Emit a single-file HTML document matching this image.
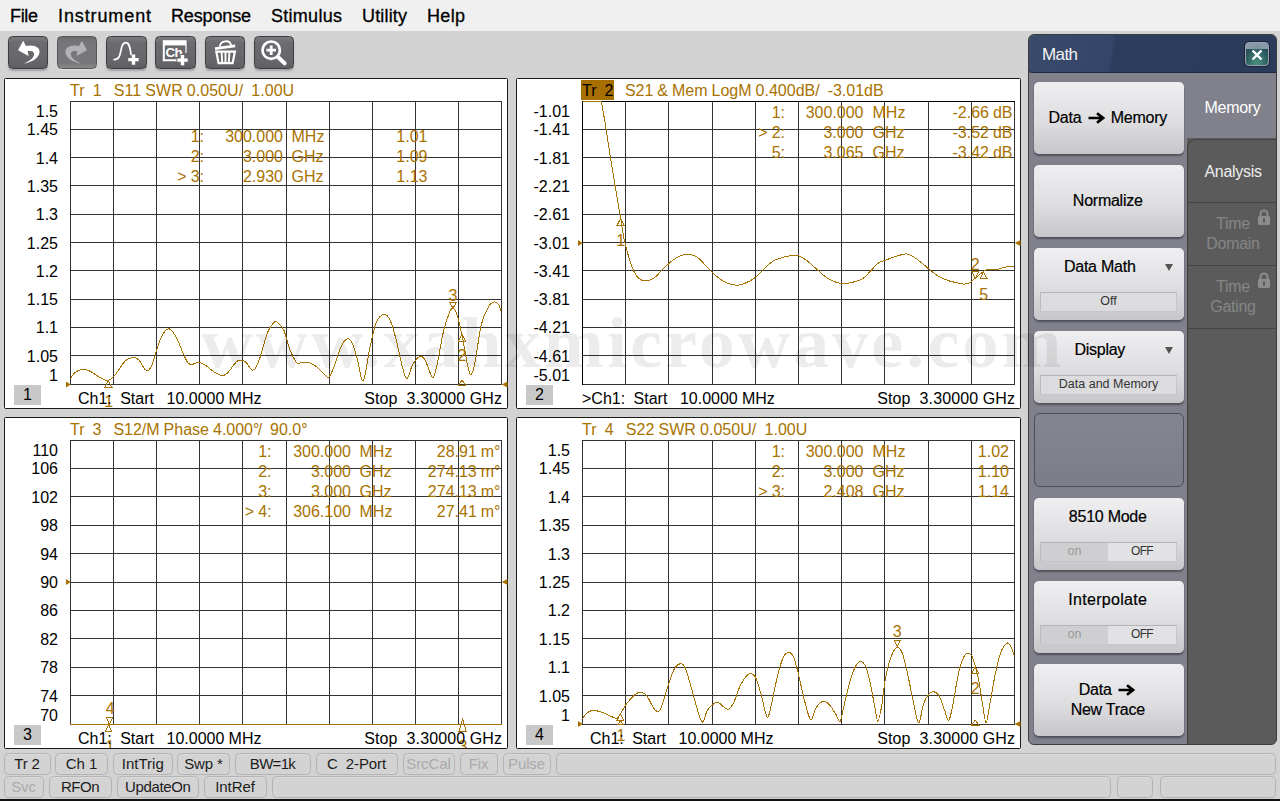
<!DOCTYPE html>
<html><head><meta charset="utf-8"><title>VNA</title>
<style>
*{box-sizing:border-box;margin:0;padding:0}
html,body{width:1280px;height:801px;overflow:hidden}
body{background:#d3d3d3;font-family:"Liberation Sans",sans-serif;position:relative;color:#000}
.abs{position:absolute}
#menu{position:absolute;left:0;top:0;width:1280px;height:31px;background:#f0f0f0}
#menu span{position:absolute;top:4.5px;-webkit-text-stroke:0.3px #000;font-size:18px;line-height:22px;color:#000;white-space:nowrap}
.tb{position:absolute;top:36px;width:40.5px;height:32.5px;border-radius:4.5px;border:1px solid #3e3e42;
 background:linear-gradient(#7a7a7e,#6c6c70 20%,#66666a 80%,#5e5e62);box-shadow:0 2px 1.5px rgba(0,0,0,.22)}
.tb.dis{background:linear-gradient(#6e6e72,#767679 20%,#78787b 85%,#8a8a8d);border-color:#56565a;box-shadow:0 1px 0 rgba(255,255,255,.25)}
.tb svg{position:absolute;left:-1px;top:-1px}
.win{position:absolute;background:#fff;border:1px solid #1a1a14;border-radius:1.5px}
.t{position:absolute;font-size:16px;line-height:19px;white-space:pre;color:#000;word-spacing:-0.45px}
.ti{letter-spacing:0.05px}
.g{color:#a87200}
.yl{text-align:right}
.hl{background:#a66f00;color:#000;padding:2px 1px 1px 1px;letter-spacing:0;margin-right:-1.5px}
.ib{position:absolute;width:27px;height:20px;background:#c8c8c8;font-size:16px;line-height:20px;text-align:center}
svg text{font-family:"Liberation Sans",sans-serif}
#wm{position:absolute;z-index:50;left:201px;top:303px;font-family:"Liberation Serif",serif;font-weight:bold;font-size:72px;
 line-height:80px;letter-spacing:3.1px;color:rgba(0,0,0,.075);white-space:nowrap;pointer-events:none}
/* status bar */
.sc{position:absolute;height:22px;border:1px solid #b4b4b4;border-radius:4.5px;font-size:15px;line-height:19px;
 text-align:center;color:#1c1c1c;white-space:pre;letter-spacing:-0.1px;box-shadow:inset 0 1px 0 #dadada}
.sc.d{color:#aaa}
/* right panel */
#pn{position:absolute;left:1028px;top:34px;width:249px;height:711px;border-radius:6px;background:#5b5b5b;overflow:hidden;border:1px solid #3c3c40}
#pt{position:absolute;left:0;top:0;width:249px;height:38px;background:linear-gradient(100deg,#3a4a6a 0,#34456a 33%,#2c3d5e 34.5%,#2b3b5a 100%);border-bottom:1px solid #1c2740;
 color:#f4f4f4;font-size:17px;letter-spacing:-0.6px;line-height:40px;padding-left:13px;border-radius:6px 6px 4px 4px}
#pl{position:absolute;left:0;top:38px;width:158px;height:671px;background:#81818c}
.pb{position:absolute;left:5px;width:149.5px;height:72px;border-radius:5px;background:linear-gradient(#efeff1,#dedee1 55%,#c6c6ca);
 box-shadow:0 2px 2px rgba(40,40,50,.55);font-size:16px;letter-spacing:-0.25px;text-align:center;color:#000;-webkit-text-stroke:0.2px #000}
.pb .l{position:absolute;left:-1px;width:100%;line-height:20px}
.fld{position:absolute;left:6px;top:43.5px;width:137px;height:20px;background:#dcdcde;border:1px solid #c6c6ca;border-top-color:#b4b4b8;border-left-color:#bcbcc0;
 font-size:12.5px;letter-spacing:0;line-height:17px;color:#333;text-align:center;-webkit-text-stroke:0}
.tab{position:absolute;left:158px;width:91px;height:63px;background:#5b5b5b;border-top:1px solid #444;color:#868686;font-size:16px;letter-spacing:-0.3px;text-align:center;line-height:20px}
</style></head><body>

<div id="menu">
<span style="left:10px;letter-spacing:-0.33px">File</span>
<span style="left:58px;letter-spacing:0.89px">Instrument</span>
<span style="left:171px;letter-spacing:-0.15px">Response</span>
<span style="left:271px;letter-spacing:0.28px">Stimulus</span>
<span style="left:362px;letter-spacing:0.17px">Utility</span>
<span style="left:427px;letter-spacing:0.33px">Help</span>
</div>
<div class="tb" style="left:7.5px"><svg width="40" height="32" viewBox="0 0 40 32"><path d="M10 14.2 L15.2 4.8 L18 10 C23 8.8 27 9.6 29.5 11.5 C32.5 14 32 18 29.3 21.2 C26.5 24.3 21 26.6 15.8 27.7 C19.5 26 23.5 23.8 25.2 21 C26.8 18.3 26.2 16 24 15.3 C22.6 14.8 21 14.8 19.6 15.1 L20.6 20 Z" fill="#fff"/></svg></div>
<div class="tb dis" style="left:56.8px"><svg width="40" height="32" viewBox="0 0 40 32"><path d="M30 14.2 L24.8 4.8 L22 10 C17 8.8 13 9.6 10.5 11.5 C7.5 14 8 18 10.7 21.2 C13.5 24.3 19 26.6 24.2 27.7 C20.5 26 16.5 23.8 14.8 21 C13.2 18.3 13.8 16 16 15.3 C17.4 14.8 19 14.8 20.4 15.1 L19.4 20 Z" fill="#b2b2b4"/></svg></div>
<div class="tb" style="left:106.0px"><svg width="40" height="32" viewBox="0 0 40 32"><path d="M8.2 23.6 C13.5 23.6 14 19 15 14 C16 8 17.5 6.6 19.8 6.6 C22.8 6.6 24 10 25 18.5" fill="none" stroke="#fff" stroke-width="1.7" stroke-linecap="round"/><path d="M22.3 23.6 h10.4 M27.5 18.4 v10.4" stroke="#fff" stroke-width="3.4"/></svg></div>
<div class="tb" style="left:155.2px"><svg width="40" height="32" viewBox="0 0 40 32"><path d="M8.8 9 v15.3 h13" fill="none" stroke="#fff" stroke-width="2"/><path d="M31 9 v8" stroke="#fff" stroke-width="1.2"/><rect x="7.8" y="4.2" width="23.8" height="5.2" fill="#fff"/><text x="10.6" y="21.2" font-size="13.4" font-weight="bold" fill="#fff" letter-spacing="-0.7">Ch</text><path d="M21.5 24.1 h12 M27.5 18.1 v12" stroke="#6a6a6e" stroke-width="5.6"/><path d="M22.3 24.1 h10.4 M27.5 18.9 v10.4" stroke="#fff" stroke-width="3.4"/></svg></div>
<div class="tb" style="left:204.5px"><svg width="40" height="32" viewBox="0 0 40 32"><path d="M10 12.6 L30.2 9.9" stroke="#fff" stroke-width="2.6"/><path d="M14.8 10.6 C15.4 4.2 25 3.4 26 9.2" fill="none" stroke="#fff" stroke-width="1.8"/><path d="M11.3 15.6 h18.6 l-2.3 11.5 h-14 Z" fill="none" stroke="#fff" stroke-width="2.2"/><path d="M16.6 16 l.6 10.5 M20.5 16 v10.5 M24.4 16 l-.6 10.5" stroke="#fff" stroke-width="1.9"/></svg></div>
<div class="tb" style="left:253.8px"><svg width="40" height="32" viewBox="0 0 40 32"><circle cx="17.2" cy="14.2" r="8.7" fill="none" stroke="#fff" stroke-width="2.7"/><path d="M24 21 L30.6 27.4" stroke="#fff" stroke-width="4" stroke-linecap="round"/><path d="M12.4 14.2 h9.6 M17.2 9.4 v9.6" stroke="#fff" stroke-width="2.8"/></svg></div>
<div class="win" style="left:4px;top:78px;width:504px;height:331px"></div>
<svg class="abs" style="left:0;top:0" width="1280" height="801" viewBox="0 0 1280 801">
<path d="M70.5 101.0 V385.0 M113.5 101.0 V385.0 M156.5 101.0 V385.0 M199.5 101.0 V385.0 M242.5 101.0 V385.0 M286.5 101.0 V385.0 M329.5 101.0 V385.0 M372.5 101.0 V385.0 M415.5 101.0 V385.0 M458.5 101.0 V385.0 M501.5 101.0 V385.0 M70.0 101.5 H502.0 M70.0 129.5 H502.0 M70.0 157.5 H502.0 M70.0 185.5 H502.0 M70.0 214.5 H502.0 M70.0 242.5 H502.0 M70.0 270.5 H502.0 M70.0 299.5 H502.0 M70.0 327.5 H502.0 M70.0 355.5 H502.0 M70.0 384.5 H502.0" stroke="#333333" stroke-width="1" fill="none" shape-rendering="crispEdges"/>
<path d="M70.5 378.8 C71.2 377.7 73.0 374.0 75.0 372.5 C77.0 371.0 80.0 369.7 82.5 369.5 C85.0 369.3 87.1 369.9 90.0 371.2 C92.9 372.6 97.0 376.0 100.0 377.5 C103.0 379.0 105.5 380.9 108.0 380.5 C110.5 380.1 112.2 378.2 115.0 375.0 C117.8 371.8 122.1 364.2 125.0 361.2 C127.9 358.3 130.2 357.7 132.5 357.5 C134.8 357.3 136.7 358.0 138.8 360.0 C140.8 362.0 143.3 367.8 145.0 369.5 C146.7 371.2 147.5 371.0 148.8 370.0 C150.0 369.0 150.6 368.8 152.5 363.8 C154.4 358.8 157.7 345.6 160.0 340.0 C162.3 334.4 164.4 331.7 166.2 330.0 C168.1 328.3 169.4 328.3 171.2 330.0 C173.1 331.7 175.2 335.4 177.5 340.0 C179.8 344.6 182.9 353.4 185.0 357.5 C187.1 361.6 187.7 363.7 190.0 364.5 C192.3 365.3 196.2 362.4 198.8 362.5 C201.2 362.6 202.3 363.3 205.0 365.0 C207.7 366.7 212.1 370.8 215.0 372.5 C217.9 374.2 220.4 375.4 222.5 375.5 C224.6 375.6 225.2 375.2 227.5 373.0 C229.8 370.8 234.0 364.2 236.2 362.0 C238.5 359.8 239.6 359.9 241.2 360.0 C242.9 360.1 244.6 360.9 246.2 362.5 C247.9 364.1 249.8 368.5 251.2 369.5 C252.7 370.5 253.5 370.8 255.0 368.8 C256.5 366.8 257.9 363.5 260.0 357.5 C262.1 351.5 265.2 338.3 267.5 332.5 C269.8 326.7 272.1 324.2 273.8 322.5 C275.4 320.8 275.8 321.2 277.5 322.5 C279.2 323.8 281.7 325.4 283.8 330.0 C285.8 334.6 287.9 344.7 290.0 350.0 C292.1 355.3 294.6 359.8 296.2 362.0 C297.9 364.2 297.9 362.9 300.0 363.0 C302.1 363.1 305.8 361.8 308.8 362.5 C311.7 363.2 314.8 365.4 317.5 367.5 C320.2 369.6 323.1 373.4 325.0 375.0 C326.9 376.6 327.3 378.2 328.8 377.0 C330.2 375.8 331.7 372.6 333.8 367.5 C335.8 362.4 339.0 351.0 341.2 346.2 C343.5 341.5 345.6 339.2 347.5 338.8 C349.4 338.3 350.8 340.2 352.5 343.8 C354.2 347.3 355.9 354.0 357.5 360.0 C359.1 366.0 360.8 377.5 362.0 380.0 C363.2 382.5 363.7 380.4 365.0 375.0 C366.3 369.6 368.1 356.2 370.0 347.5 C371.9 338.8 374.0 328.0 376.2 322.5 C378.5 317.0 381.5 314.9 383.8 314.5 C386.0 314.1 387.9 315.8 390.0 320.0 C392.1 324.2 394.2 332.1 396.2 340.0 C398.3 347.9 400.7 361.0 402.5 367.5 C404.3 374.0 405.3 379.2 407.0 378.8 C408.7 378.3 410.3 368.8 412.5 365.0 C414.7 361.2 417.9 357.1 420.0 356.2 C422.1 355.4 423.3 357.3 425.0 360.0 C426.7 362.7 428.6 369.6 430.0 372.5 C431.4 375.4 432.0 379.2 433.2 377.5 C434.5 375.8 435.8 370.4 437.5 362.5 C439.2 354.6 441.7 338.5 443.8 330.0 C445.8 321.5 448.5 314.8 450.0 311.2 C451.5 307.7 452.0 308.5 453.0 308.8 C454.0 309.0 454.8 308.1 456.2 312.5 C457.8 316.9 460.1 326.2 462.0 335.0 C463.9 343.8 466.0 358.4 467.5 365.0 C469.0 371.6 470.0 374.9 471.2 374.5 C472.5 374.1 473.3 370.8 475.0 362.5 C476.7 354.2 479.0 334.4 481.2 325.0 C483.5 315.6 486.5 310.1 488.8 306.2 C491.0 302.4 492.8 302.2 494.5 302.0 C496.2 301.8 497.6 303.5 498.8 305.0 C499.9 306.5 500.8 310.2 501.2 311.2" stroke="#a87200" stroke-width="1" fill="none" shape-rendering="crispEdges"/>
<path d="M108.4 380.7 L105.0 387.2 L111.8 387.2 Z" fill="none" stroke="#a87200" stroke-width="1" shape-rendering="crispEdges"/>
<text x="108.8" y="407.0" text-anchor="middle" font-size="16" fill="#a87200">1</text>
<text x="453.0" y="301.0" text-anchor="middle" font-size="16" fill="#a87200">3</text>
<path d="M453.0 308.5 L449.6 302.0 L456.4 302.0 Z" fill="none" stroke="#a87200" stroke-width="1" shape-rendering="crispEdges"/>
<path d="M462.0 334.5 L458.6 341.0 L465.4 341.0 Z" fill="none" stroke="#a87200" stroke-width="1" shape-rendering="crispEdges"/>
<text x="462.0" y="361.0" text-anchor="middle" font-size="16" fill="#a87200">2</text>
<path d="M462.0 380.0 L458.5 385.0 L465.5 385.0 Z" fill="none" stroke="#a87200" stroke-width="1" shape-rendering="crispEdges"/>
<path d="M66.0 381.5 l4.8 3 l-4.8 3 Z" fill="#a87200"/>
<path d="M507.5 381.5 l-5.8 3 l5.8 3 Z" fill="#a87200"/>
</svg>
<div class="t g ti" style="left:70px;top:81px">Tr&nbsp; 1&nbsp;&nbsp; S11 SWR 0.050U/&nbsp; 1.00U</div>
<div class="t yl" style="left:6px;top:102.0px;width:52px">1.5</div>
<div class="t yl" style="left:6px;top:120.3px;width:52px">1.45</div>
<div class="t yl" style="left:6px;top:148.6px;width:52px">1.4</div>
<div class="t yl" style="left:6px;top:176.9px;width:52px">1.35</div>
<div class="t yl" style="left:6px;top:205.2px;width:52px">1.3</div>
<div class="t yl" style="left:6px;top:233.5px;width:52px">1.25</div>
<div class="t yl" style="left:6px;top:261.8px;width:52px">1.2</div>
<div class="t yl" style="left:6px;top:290.1px;width:52px">1.15</div>
<div class="t yl" style="left:6px;top:318.4px;width:52px">1.1</div>
<div class="t yl" style="left:6px;top:346.7px;width:52px">1.05</div>
<div class="t yl" style="left:6px;top:366.0px;width:52px">1</div>
<div class="ib" style="left:14px;top:385px">1</div>
<div class="t" style="word-spacing:-0.25px;left:78px;top:389px">Ch1:&nbsp; Start&nbsp;&nbsp; 10.0000 MHz</div>
<div class="t" style="word-spacing:0;letter-spacing:0.1px;right:778px;top:389px">Stop&nbsp; 3.30000 GHz</div>
<div class="t g" style="right:1076.0px;top:127px">1:</div>
<div class="t g" style="right:997.0px;top:127px">300.000</div>
<div class="t g" style="left:291.5px;top:127px">MHz</div>
<div class="t g" style="right:852.5px;top:127px">1.01</div>
<div class="t g" style="right:1076.0px;top:147px">2:</div>
<div class="t g" style="right:997.0px;top:147px">3.000</div>
<div class="t g" style="left:291.5px;top:147px">GHz</div>
<div class="t g" style="right:852.5px;top:147px">1.09</div>
<div class="t g" style="right:1076.0px;top:167px">&gt; 3:</div>
<div class="t g" style="right:997.0px;top:167px">2.930</div>
<div class="t g" style="left:291.5px;top:167px">GHz</div>
<div class="t g" style="right:852.5px;top:167px">1.13</div>
<div class="win" style="left:516px;top:78px;width:505px;height:331px"></div>
<svg class="abs" style="left:0;top:0" width="1280" height="801" viewBox="0 0 1280 801">
<path d="M582.5 101.0 V385.0 M625.5 101.0 V385.0 M668.5 101.0 V385.0 M712.5 101.0 V385.0 M755.5 101.0 V385.0 M798.5 101.0 V385.0 M841.5 101.0 V385.0 M884.5 101.0 V385.0 M928.5 101.0 V385.0 M971.5 101.0 V385.0 M1014.5 101.0 V385.0 M582.0 101.5 H1015.0 M582.0 129.5 H1015.0 M582.0 157.5 H1015.0 M582.0 185.5 H1015.0 M582.0 214.5 H1015.0 M582.0 242.5 H1015.0 M582.0 270.5 H1015.0 M582.0 299.5 H1015.0 M582.0 327.5 H1015.0 M582.0 355.5 H1015.0 M582.0 384.5 H1015.0" stroke="#333333" stroke-width="1" fill="none" shape-rendering="crispEdges"/>
<path d="M601.4 101.7 C602.0 105.0 603.4 112.6 604.9 121.8 C606.4 131.0 608.5 145.5 610.3 156.7 C612.1 167.9 613.9 178.9 615.6 189.0 C617.3 199.1 619.1 209.0 620.5 217.1 C621.9 225.2 622.5 231.2 623.7 237.3 C624.9 243.4 626.1 248.0 627.7 253.4 C629.3 258.8 631.3 265.4 633.1 269.5 C634.9 273.6 636.3 276.2 638.5 278.1 C640.7 280.0 643.8 281.1 646.5 281.0 C649.2 280.9 651.9 279.4 654.6 277.5 C657.3 275.6 659.7 272.3 662.6 269.5 C665.5 266.7 668.9 263.2 672.0 260.9 C675.1 258.6 678.5 256.6 681.4 255.5 C684.3 254.4 686.8 254.2 689.5 254.5 C692.2 254.8 694.6 255.3 697.5 257.4 C700.4 259.4 703.8 263.7 706.9 266.8 C710.0 269.9 713.2 273.6 716.3 276.2 C719.4 278.8 722.4 280.9 725.7 282.4 C729.1 283.9 733.0 285.2 736.4 285.3 C739.8 285.4 742.7 284.2 745.8 282.9 C748.9 281.6 752.1 279.9 755.2 277.5 C758.3 275.1 761.5 271.0 764.6 268.2 C767.7 265.4 770.6 262.5 774.0 260.6 C777.4 258.7 781.0 257.8 784.8 256.9 C788.6 256.0 793.2 255.0 796.8 255.5 C800.4 256.0 803.1 258.0 806.2 260.1 C809.3 262.2 812.2 265.3 815.6 268.2 C819.0 271.1 823.0 275.2 826.4 277.5 C829.8 279.8 832.9 281.1 835.8 282.1 C838.7 283.1 840.9 283.5 843.8 283.5 C846.7 283.5 850.1 282.9 853.2 282.1 C856.3 281.3 859.7 280.8 862.6 278.9 C865.5 277.0 868.0 273.5 870.7 270.8 C873.4 268.1 876.1 264.6 878.7 262.8 C881.3 261.0 883.2 260.9 886.3 259.8 C889.3 258.7 893.7 257.1 897.0 256.1 C900.3 255.1 903.3 253.8 906.0 253.9 C908.7 254.0 910.5 255.0 913.2 256.6 C915.9 258.2 919.2 260.9 922.2 263.3 C925.2 265.7 928.2 268.7 931.2 271.0 C934.2 273.3 937.2 275.7 940.2 277.3 C943.2 278.9 946.1 279.9 949.1 280.9 C952.1 281.8 955.6 282.5 958.1 283.0 C960.6 283.5 962.5 284.2 964.4 284.1 C966.3 284.1 968.0 283.7 969.8 282.7 C971.6 281.7 973.4 279.7 975.2 278.2 C977.0 276.7 978.7 275.1 980.6 273.7 C982.5 272.3 984.0 270.4 986.9 269.7 C989.8 268.9 994.4 269.7 997.7 269.2 C1001.0 268.7 1003.9 267.2 1006.6 266.8 C1009.3 266.4 1012.6 266.6 1013.8 266.5" stroke="#a87200" stroke-width="1" fill="none" shape-rendering="crispEdges"/>
<path d="M582.5 101 V385 M601 101.5 H1015" stroke="#000" stroke-width="1" shape-rendering="crispEdges"/>
<path d="M583 101.5 H601.5" stroke="#a87200" stroke-width="1" shape-rendering="crispEdges"/>
<path d="M620.6 218.5 L617.2 225.0 L624.0 225.0 Z" fill="none" stroke="#a87200" stroke-width="1" shape-rendering="crispEdges"/>
<text x="620.6" y="246.0" text-anchor="middle" font-size="16" fill="#a87200">1</text>
<text x="975.2" y="269.5" text-anchor="middle" font-size="16" fill="#a87200">2</text>
<path d="M975.2 278.2 L971.8 271.7 L978.6 271.7 Z" fill="none" stroke="#a87200" stroke-width="1" shape-rendering="crispEdges"/>
<path d="M983.6 272.0 L980.2 278.5 L987.0 278.5 Z" fill="none" stroke="#a87200" stroke-width="1" shape-rendering="crispEdges"/>
<text x="983.6" y="299.5" text-anchor="middle" font-size="16" fill="#a87200">5</text>
<path d="M578.0 240.0 l4.8 3 l-4.8 3 Z" fill="#a87200"/>
<path d="M1020.5 240.0 l-5.8 3 l5.8 3 Z" fill="#a87200"/>
</svg>
<div class="t g" style="left:581px;top:81px"><span class="hl">Tr&nbsp; 2</span>&nbsp;&nbsp; S21 &amp; Mem LogM 0.400dB/&nbsp; -3.01dB</div>
<div class="t yl" style="left:518px;top:102.0px;width:52px">-1.01</div>
<div class="t yl" style="left:518px;top:120.3px;width:52px">-1.41</div>
<div class="t yl" style="left:518px;top:148.6px;width:52px">-1.81</div>
<div class="t yl" style="left:518px;top:176.9px;width:52px">-2.21</div>
<div class="t yl" style="left:518px;top:205.2px;width:52px">-2.61</div>
<div class="t yl" style="left:518px;top:233.5px;width:52px">-3.01</div>
<div class="t yl" style="left:518px;top:261.8px;width:52px">-3.41</div>
<div class="t yl" style="left:518px;top:290.1px;width:52px">-3.81</div>
<div class="t yl" style="left:518px;top:318.4px;width:52px">-4.21</div>
<div class="t yl" style="left:518px;top:346.7px;width:52px">-4.61</div>
<div class="t yl" style="left:518px;top:366.0px;width:52px">-5.01</div>
<div class="ib" style="left:526px;top:385px">2</div>
<div class="t" style="word-spacing:-0.25px;left:582px;top:389px">&gt;Ch1:&nbsp; Start&nbsp;&nbsp; 10.0000 MHz</div>
<div class="t" style="word-spacing:0;letter-spacing:0.1px;right:265px;top:389px">Stop&nbsp; 3.30000 GHz</div>
<div class="t g" style="right:495.0px;top:103px">1:</div>
<div class="t g" style="right:416.5px;top:103px">300.000</div>
<div class="t g" style="left:872.5px;top:103px">MHz</div>
<div class="t g" style="right:267.5px;top:103px">-2.66 dB</div>
<div class="t g" style="right:495.0px;top:123px">&gt; 2:</div>
<div class="t g" style="right:416.5px;top:123px">3.000</div>
<div class="t g" style="left:872.5px;top:123px">GHz</div>
<div class="t g" style="right:267.5px;top:123px">-3.52 dB</div>
<div class="t g" style="right:495.0px;top:143px">5:</div>
<div class="t g" style="right:416.5px;top:143px">3.065</div>
<div class="t g" style="left:872.5px;top:143px">GHz</div>
<div class="t g" style="right:267.5px;top:143px">-3.42 dB</div>
<div class="win" style="left:4px;top:417px;width:504px;height:332px"></div>
<svg class="abs" style="left:0;top:0" width="1280" height="801" viewBox="0 0 1280 801">
<path d="M70.5 440.0 V725.0 M113.5 440.0 V725.0 M156.5 440.0 V725.0 M199.5 440.0 V725.0 M242.5 440.0 V725.0 M286.5 440.0 V725.0 M329.5 440.0 V725.0 M372.5 440.0 V725.0 M415.5 440.0 V725.0 M458.5 440.0 V725.0 M501.5 440.0 V725.0 M70.0 440.5 H502.0 M70.0 468.5 H502.0 M70.0 496.5 H502.0 M70.0 525.5 H502.0 M70.0 553.5 H502.0 M70.0 582.5 H502.0 M70.0 610.5 H502.0 M70.0 638.5 H502.0 M70.0 667.5 H502.0 M70.0 695.5 H502.0 M70.0 724.5 H502.0" stroke="#333333" stroke-width="1" fill="none" shape-rendering="crispEdges"/>
<clipPath id="c3"><rect x="5" y="419" width="502" height="329"/></clipPath>
<path d="M70 724.5 H501.5" stroke="#a87200" stroke-width="1" shape-rendering="crispEdges"/>
<text x="110.3" y="714.0" text-anchor="middle" font-size="16" fill="#a87200">4</text>
<path d="M109.5 724.5 L106.1 717.0 L112.9 717.0 Z" fill="none" stroke="#a87200" stroke-width="1" shape-rendering="crispEdges"/>
<path d="M108.5 725.0 L105.1 731.5 L111.9 731.5 Z" fill="none" stroke="#a87200" stroke-width="1" shape-rendering="crispEdges"/>
<g clip-path="url(#c3)"><text x="110.0" y="751.5" text-anchor="middle" font-size="16" fill="#a87200">1</text></g>
<path d="M462.6 719.0 L459.1 731.0 L466.1 731.0 Z" fill="none" stroke="#a87200" stroke-width="1" shape-rendering="crispEdges"/>
<g clip-path="url(#c3)"><text x="463.0" y="752.0" text-anchor="middle" font-size="16" fill="#a87200">3</text></g>
<path d="M66.0 579.0 l4.8 3 l-4.8 3 Z" fill="#a87200"/>
<path d="M507.5 579.0 l-5.8 3 l5.8 3 Z" fill="#a87200"/>
</svg>
<div class="t g ti" style="left:70px;top:420px"><span style="letter-spacing:0">Tr&nbsp; 3&nbsp;&nbsp; S12/M Phase 4.000<span style="letter-spacing:-1.8px">&deg;</span>/&nbsp; 90.0<span style="letter-spacing:-1px">&deg;</span></span></div>
<div class="t yl" style="left:6px;top:441.0px;width:52px">110</div>
<div class="t yl" style="left:6px;top:459.4px;width:52px">106</div>
<div class="t yl" style="left:6px;top:487.8px;width:52px">102</div>
<div class="t yl" style="left:6px;top:516.2px;width:52px">98</div>
<div class="t yl" style="left:6px;top:544.6px;width:52px">94</div>
<div class="t yl" style="left:6px;top:573.0px;width:52px">90</div>
<div class="t yl" style="left:6px;top:601.4px;width:52px">86</div>
<div class="t yl" style="left:6px;top:629.8px;width:52px">82</div>
<div class="t yl" style="left:6px;top:658.2px;width:52px">78</div>
<div class="t yl" style="left:6px;top:686.6px;width:52px">74</div>
<div class="t yl" style="left:6px;top:706.0px;width:52px">70</div>
<div class="ib" style="left:14px;top:725px">3</div>
<div class="t" style="word-spacing:-0.25px;left:78px;top:729px">Ch1:&nbsp; Start&nbsp;&nbsp; 10.0000 MHz</div>
<div class="t" style="word-spacing:0;letter-spacing:0.1px;right:778px;top:729px">Stop&nbsp; 3.30000 GHz</div>
<div class="t g" style="right:1008.5px;top:442px">1:</div>
<div class="t g" style="right:929.0px;top:442px">300.000</div>
<div class="t g" style="left:359.5px;top:442px">MHz</div>
<div class="t g" style="right:779.5px;top:442px">28.91 m&deg;</div>
<div class="t g" style="right:1008.5px;top:462px">2:</div>
<div class="t g" style="right:929.0px;top:462px">3.000</div>
<div class="t g" style="left:359.5px;top:462px">GHz</div>
<div class="t g" style="right:779.5px;top:462px">274.13 m&deg;</div>
<div class="t g" style="right:1008.5px;top:482px">3:</div>
<div class="t g" style="right:929.0px;top:482px">3.000</div>
<div class="t g" style="left:359.5px;top:482px">GHz</div>
<div class="t g" style="right:779.5px;top:482px">274.13 m&deg;</div>
<div class="t g" style="right:1008.5px;top:502px">&gt; 4:</div>
<div class="t g" style="right:929.0px;top:502px">306.100</div>
<div class="t g" style="left:359.5px;top:502px">MHz</div>
<div class="t g" style="right:779.5px;top:502px">27.41 m&deg;</div>
<div class="win" style="left:516px;top:417px;width:505px;height:332px"></div>
<svg class="abs" style="left:0;top:0" width="1280" height="801" viewBox="0 0 1280 801">
<path d="M582.5 440.0 V725.0 M625.5 440.0 V725.0 M668.5 440.0 V725.0 M712.5 440.0 V725.0 M755.5 440.0 V725.0 M798.5 440.0 V725.0 M841.5 440.0 V725.0 M884.5 440.0 V725.0 M928.5 440.0 V725.0 M971.5 440.0 V725.0 M1014.5 440.0 V725.0 M582.0 440.5 H1015.0 M582.0 468.5 H1015.0 M582.0 496.5 H1015.0 M582.0 525.5 H1015.0 M582.0 553.5 H1015.0 M582.0 582.5 H1015.0 M582.0 610.5 H1015.0 M582.0 638.5 H1015.0 M582.0 667.5 H1015.0 M582.0 695.5 H1015.0 M582.0 724.5 H1015.0" stroke="#333333" stroke-width="1" fill="none" shape-rendering="crispEdges"/>
<path d="M582.5 718.8 C583.3 717.7 585.6 713.9 587.5 712.5 C589.4 711.1 591.2 710.5 593.8 710.5 C596.2 710.5 599.4 711.4 602.5 712.5 C605.6 713.6 610.0 716.1 612.5 717.0 C615.0 717.9 616.0 718.8 617.5 718.0 C619.0 717.2 619.6 715.1 621.2 712.5 C622.9 709.9 625.2 705.5 627.5 702.5 C629.8 699.5 632.9 696.2 635.0 694.5 C637.1 692.8 638.1 692.4 640.0 692.5 C641.9 692.6 644.2 692.7 646.2 695.0 C648.3 697.3 650.7 703.5 652.5 706.2 C654.3 709.0 655.5 711.0 657.0 711.2 C658.5 711.5 659.5 711.5 661.2 707.5 C663.0 703.5 665.4 693.8 667.5 687.5 C669.6 681.2 671.7 674.0 673.8 670.0 C675.8 666.0 678.1 664.2 680.0 663.8 C681.9 663.3 683.1 663.5 685.0 667.5 C686.9 671.5 689.2 680.4 691.2 687.5 C693.3 694.6 695.6 704.2 697.5 710.0 C699.4 715.8 700.8 722.0 702.5 722.0 C704.2 722.0 705.6 713.0 707.5 710.0 C709.4 707.0 711.9 704.9 713.8 703.8 C715.6 702.6 716.9 702.3 718.8 703.0 C720.6 703.7 723.3 707.0 725.0 708.0 C726.7 709.0 727.3 709.9 728.8 709.0 C730.2 708.1 731.9 706.3 733.8 702.5 C735.6 698.7 737.9 690.6 740.0 686.2 C742.1 681.9 744.4 678.3 746.2 676.2 C748.1 674.2 749.6 673.3 751.2 673.8 C752.9 674.2 754.6 675.2 756.2 678.8 C757.9 682.3 759.7 689.4 761.2 695.0 C762.8 700.6 764.4 708.8 765.5 712.5 C766.6 716.2 767.0 718.6 768.0 717.2 C769.0 715.8 770.1 710.3 771.6 703.9 C773.1 697.5 775.0 686.3 776.9 678.6 C778.8 670.9 781.2 661.8 783.2 657.5 C785.2 653.2 787.4 652.6 789.1 652.6 C790.9 652.6 792.2 654.2 793.7 657.5 C795.2 660.8 796.2 665.3 798.0 672.3 C799.8 679.3 802.2 691.8 804.3 699.7 C806.4 707.6 808.7 718.3 810.6 719.7 C812.5 721.1 813.8 711.2 815.9 708.1 C818.0 705.0 821.0 701.7 823.3 701.2 C825.6 700.7 827.5 702.8 829.6 705.0 C831.7 707.2 834.1 711.7 835.9 714.4 C837.7 717.1 838.8 723.0 840.2 721.2 C841.6 719.5 842.6 711.0 844.4 703.9 C846.1 696.8 848.6 685.3 850.7 678.6 C852.8 671.9 855.2 666.6 857.0 663.8 C858.8 661.0 859.8 661.4 861.2 661.7 C862.6 662.1 864.1 662.7 865.5 665.9 C866.9 669.1 868.1 673.7 869.7 680.7 C871.3 687.7 873.7 701.4 875.0 708.1 C876.3 714.9 876.7 721.2 877.7 721.2 C878.8 721.2 880.0 715.2 881.3 708.1 C882.6 701.0 883.9 687.0 885.5 678.6 C887.1 670.2 888.9 662.7 890.8 657.5 C892.7 652.3 895.2 648.1 897.1 647.4 C899.0 646.7 900.6 648.8 902.4 653.3 C904.2 657.8 906.0 666.7 907.7 674.4 C909.5 682.1 911.1 691.7 912.9 699.7 C914.7 707.7 916.8 721.8 918.6 722.5 C920.4 723.2 921.8 708.6 923.5 703.9 C925.2 699.2 927.0 696.4 928.7 694.4 C930.5 692.4 932.2 691.4 934.0 691.7 C935.8 692.1 937.5 693.4 939.3 696.5 C941.1 699.6 943.0 706.2 944.6 710.2 C946.2 714.2 947.4 721.5 948.8 720.4 C950.2 719.3 951.4 711.6 953.0 703.9 C954.6 696.2 956.5 682.1 958.3 674.4 C960.0 666.7 961.8 661.0 963.5 657.5 C965.2 654.0 967.2 653.1 968.8 653.3 C970.4 653.5 971.4 654.4 973.0 658.6 C974.6 662.8 976.7 671.1 978.3 678.6 C979.9 686.1 981.2 696.5 982.5 703.9 C983.8 711.3 984.9 722.9 986.1 722.9 C987.3 722.9 988.4 712.0 989.9 703.9 C991.4 695.8 993.4 682.8 995.2 674.4 C997.0 666.0 998.6 658.5 1000.5 653.3 C1002.4 648.1 1005.0 644.2 1006.8 643.2 C1008.5 642.2 1009.8 645.0 1011.0 647.0 C1012.2 649.0 1013.7 654.0 1014.2 655.4" stroke="#a87200" stroke-width="1" fill="none" shape-rendering="crispEdges"/>
<path d="M620.4 713.5 L617.0 720.5 L623.8 720.5 Z" fill="none" stroke="#a87200" stroke-width="1" shape-rendering="crispEdges"/>
<path d="M620.6 720.7 L618.3 724.2 L622.9 724.2 Z" fill="none" stroke="#a87200" stroke-width="1" shape-rendering="crispEdges"/>
<text x="621.0" y="740.6" text-anchor="middle" font-size="16" fill="#a87200">1</text>
<text x="897.3" y="637.0" text-anchor="middle" font-size="16" fill="#a87200">3</text>
<path d="M897.3 646.5 L893.9 640.0 L900.7 640.0 Z" fill="none" stroke="#a87200" stroke-width="1" shape-rendering="crispEdges"/>
<path d="M975.2 667.0 L971.8 673.5 L978.6 673.5 Z" fill="none" stroke="#a87200" stroke-width="1" shape-rendering="crispEdges"/>
<text x="975.2" y="693.5" text-anchor="middle" font-size="16" fill="#a87200">2</text>
<path d="M975.2 720.0 L971.7 725.0 L978.7 725.0 Z" fill="none" stroke="#a87200" stroke-width="1" shape-rendering="crispEdges"/>
<path d="M578.0 721.0 l4.8 3 l-4.8 3 Z" fill="#a87200"/>
<path d="M1020.5 721.0 l-5.8 3 l5.8 3 Z" fill="#a87200"/>
</svg>
<div class="t g ti" style="left:582px;top:420px">Tr&nbsp; 4&nbsp;&nbsp; S22 SWR 0.050U/&nbsp; 1.00U</div>
<div class="t yl" style="left:518px;top:441.0px;width:52px">1.5</div>
<div class="t yl" style="left:518px;top:459.4px;width:52px">1.45</div>
<div class="t yl" style="left:518px;top:487.8px;width:52px">1.4</div>
<div class="t yl" style="left:518px;top:516.2px;width:52px">1.35</div>
<div class="t yl" style="left:518px;top:544.6px;width:52px">1.3</div>
<div class="t yl" style="left:518px;top:573.0px;width:52px">1.25</div>
<div class="t yl" style="left:518px;top:601.4px;width:52px">1.2</div>
<div class="t yl" style="left:518px;top:629.8px;width:52px">1.15</div>
<div class="t yl" style="left:518px;top:658.2px;width:52px">1.1</div>
<div class="t yl" style="left:518px;top:686.6px;width:52px">1.05</div>
<div class="t yl" style="left:518px;top:706.0px;width:52px">1</div>
<div class="ib" style="left:526px;top:725px">4</div>
<div class="t" style="word-spacing:-0.25px;left:590px;top:729px">Ch1:&nbsp; Start&nbsp;&nbsp; 10.0000 MHz</div>
<div class="t" style="word-spacing:0;letter-spacing:0.1px;right:265px;top:729px">Stop&nbsp; 3.30000 GHz</div>
<div class="t g" style="right:495.0px;top:442px">1:</div>
<div class="t g" style="right:416.5px;top:442px">300.000</div>
<div class="t g" style="left:872.5px;top:442px">MHz</div>
<div class="t g" style="right:271.0px;top:442px">1.02</div>
<div class="t g" style="right:495.0px;top:462px">2:</div>
<div class="t g" style="right:416.5px;top:462px">3.000</div>
<div class="t g" style="left:872.5px;top:462px">GHz</div>
<div class="t g" style="right:271.0px;top:462px">1.10</div>
<div class="t g" style="right:495.0px;top:482px">&gt; 3:</div>
<div class="t g" style="right:416.5px;top:482px">2.408</div>
<div class="t g" style="left:872.5px;top:482px">GHz</div>
<div class="t g" style="right:271.0px;top:482px">1.14</div>
<div id="wm">www.xahxmicrowave.com</div>
<div class="sc" style="left:3.5px;top:753px;width:47.0px;letter-spacing:-0.10px">Tr 2</div>
<div class="sc" style="left:55.0px;top:753px;width:53.0px;letter-spacing:-0.10px">Ch 1</div>
<div class="sc" style="left:112.5px;top:753px;width:60.5px;letter-spacing:0.00px">IntTrig</div>
<div class="sc" style="left:177.0px;top:753px;width:53.0px;letter-spacing:-0.10px">Swp *</div>
<div class="sc" style="left:234.5px;top:753px;width:76.0px;letter-spacing:-0.70px">BW=1k</div>
<div class="sc" style="left:315.5px;top:753px;width:82.0px;letter-spacing:-0.10px">C  2-Port</div>
<div class="sc d" style="left:402.5px;top:753px;width:52.0px;letter-spacing:-0.10px">SrcCal</div>
<div class="sc d" style="left:459.5px;top:753px;width:38.0px;letter-spacing:-0.10px">Fix</div>
<div class="sc d" style="left:502.5px;top:753px;width:48.0px;letter-spacing:-0.10px">Pulse</div>
<div class="sc" style="left:555.5px;top:753px;width:720.0px;letter-spacing:-0.10px"></div>
<div class="sc d" style="left:3.5px;top:776px;width:40.0px;letter-spacing:-0.10px">Svc</div>
<div class="sc" style="left:48.5px;top:776px;width:63.0px;letter-spacing:-0.45px">RFOn</div>
<div class="sc" style="left:116.5px;top:776px;width:82.5px;letter-spacing:-0.35px">UpdateOn</div>
<div class="sc" style="left:203.5px;top:776px;width:63.0px;letter-spacing:-0.10px">IntRef</div>
<div class="sc" style="left:271.5px;top:776px;width:839.5px;letter-spacing:-0.10px"></div>
<div class="sc" style="left:1117.0px;top:776px;width:36.0px;letter-spacing:-0.10px"></div>
<div class="sc" style="left:1159.5px;top:776px;width:116.0px;letter-spacing:-0.10px"></div>
<div class="abs" style="left:0;top:799px;width:1280px;height:2px;background:#111"></div>
<div id="pn"><div class="abs" style="left:0;top:0;width:249px;height:709px"><div id="pl"></div>
<div id="pt">Math</div>
<div class="abs" style="left:216px;top:7px;width:24px;height:24px;border-radius:4px;border:1px solid #98a2b0;box-shadow:0 0 0 1px #1c2538;background:radial-gradient(ellipse at 50% 100%,#4a9080 0,rgba(74,144,128,0) 70%),linear-gradient(#8a98aa 0,#8a98aa 26%,#28505a 27%,#2e6462 100%)"><svg width="22" height="22" viewBox="0 0 22 22" class="abs" style="left:0;top:0"><path d="M6.5 7.5 l9 9 M15.5 7.5 l-9 9" stroke="#fff" stroke-width="2.4"/></svg></div>
<div class="pb" style="top:47px"><div class="l" style="top:26px">Data <svg width="17" height="12" viewBox="0 0 17 12" style="vertical-align:-1px;margin:0 1.5px 0 2.5px"><path d="M0.5 6 H13 M9 1.3 L15 6 L9 10.7" stroke="#000" stroke-width="2.7" fill="none" stroke-linejoin="miter"/></svg> Memory</div></div>
<div class="pb" style="top:130px"><div class="l" style="top:26px">Normalize</div></div>
<div class="pb" style="top:213px"><div class="l" style="top:9px;left:-9px">Data Math</div><svg class="abs" style="left:130px;top:15px" width="10" height="9" viewBox="0 0 10 9"><path d="M1 1 h8 l-4 7 Z" fill="#555"/></svg><div class="fld">Off</div></div>
<div class="pb" style="top:296px"><div class="l" style="top:9px;left:-9px">Display</div><svg class="abs" style="left:130px;top:15px" width="10" height="9" viewBox="0 0 10 9"><path d="M1 1 h8 l-4 7 Z" fill="#555"/></svg><div class="fld">Data and Memory</div></div>
<div class="abs" style="left:5px;top:378px;width:150px;height:74px;border-radius:6px;border:1.5px solid #4e4e58;background:linear-gradient(#85858f,#7d7d88)"></div>
<div class="pb" style="top:463px"><div class="l" style="top:9px">8510 Mode</div><div class="fld" style="background:#e2e2e4;text-align:left"><div class="abs" style="left:0;top:0;width:67px;height:18px;background:#cfcfd2;color:#999;text-align:center">on</div><div class="abs" style="left:67px;top:0;width:68px;height:18px;text-align:center;color:#333;font-size:12px;letter-spacing:-0.7px">OFF</div></div></div>
<div class="pb" style="top:546px"><div class="l" style="top:9px;letter-spacing:0.3px">Interpolate</div><div class="fld" style="background:#e2e2e4;text-align:left"><div class="abs" style="left:0;top:0;width:67px;height:18px;background:#cfcfd2;color:#999;text-align:center">on</div><div class="abs" style="left:67px;top:0;width:68px;height:18px;text-align:center;color:#333;font-size:12px;letter-spacing:-0.7px">OFF</div></div></div>
<div class="pb" style="top:629px"><div class="l" style="top:16px">Data <svg width="17" height="12" viewBox="0 0 17 12" style="vertical-align:-1px;margin:0 1.5px 0 2.5px"><path d="M0.5 6 H13 M9 1.3 L15 6 L9 10.7" stroke="#000" stroke-width="2.7" fill="none" stroke-linejoin="miter"/></svg></div><div class="l" style="top:36px">New Trace</div></div>
<div class="tab" style="top:38px;height:65px;background:#81818c;border:none;color:#fff"><div style="position:absolute;top:24.5px;width:100%">Memory</div></div>
<div class="tab" style="top:103.5px;border-radius:9px 0 0 0;border-left:1px solid #3e3e36;color:#ececec"><div style="position:absolute;top:22px;width:100%">Analysis</div></div>
<div class="tab" style="top:167px;border-left:1px solid #3e3e36"><div style="position:absolute;top:11px;width:100%">Time<br>Domain</div><svg class="abs" style="left:69px;top:5.5px" width="14" height="17" viewBox="0 0 14 17"><path d="M3.5 8 V5 a3.5 3.5 0 0 1 7 0 V8" fill="none" stroke="#8c8c8c" stroke-width="2"/><rect x="1" y="7" width="12" height="9" rx="1" fill="#8c8c8c"/><rect x="6" y="9.5" width="2" height="4" fill="#5b5b5b"/></svg></div>
<div class="tab" style="top:230px;border-left:1px solid #3e3e36"><div style="position:absolute;top:11px;width:100%">Time<br>Gating</div><svg class="abs" style="left:69px;top:5.5px" width="14" height="17" viewBox="0 0 14 17"><path d="M3.5 8 V5 a3.5 3.5 0 0 1 7 0 V8" fill="none" stroke="#8c8c8c" stroke-width="2"/><rect x="1" y="7" width="12" height="9" rx="1" fill="#8c8c8c"/><rect x="6" y="9.5" width="2" height="4" fill="#5b5b5b"/></svg></div>
<div class="abs" style="left:158px;top:293px;width:91px;height:1px;background:#444"></div>
<div class="abs" style="left:158px;top:293px;width:1px;height:416px;background:#3e3e36"></div>
</div></div>
</body></html>
